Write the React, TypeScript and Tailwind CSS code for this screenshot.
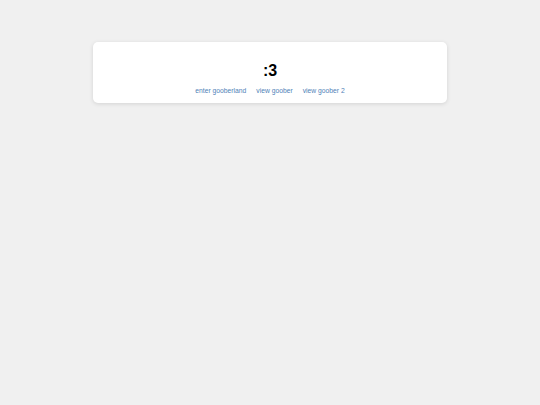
export default function App() {
  return (
    <div className="min-h-[405px] bg-[#f0f0f0] pt-[42px] font-['Liberation_Sans',Arial,sans-serif]">
      <div className="mx-auto w-[354px] h-[61px] rounded-[5px] bg-white shadow-[0_1px_4px_rgba(0,0,0,0.12)] flex flex-col items-center pt-[19px]">
        <h1 className="text-[16px] leading-[20px] font-bold text-black">:3</h1>
        <div className="mt-[5px] flex gap-[10px] text-[6.75px] leading-[9px] text-[#4f82b8]">
          <a href="#">enter gooberland</a>
          <a href="#">view goober</a>
          <a href="#">view goober 2</a>
        </div>
      </div>
    </div>
  )
}
